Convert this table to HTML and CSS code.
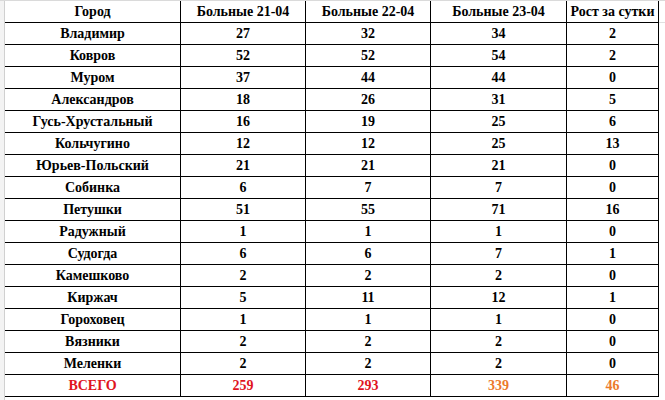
FILE: index.html
```html
<!DOCTYPE html>
<html lang="ru">
<head>
<meta charset="utf-8">
<title>Больные по городам</title>
<link rel="stylesheet" href="styles.css">
</head>
<body>
<div class="sheet">
  <div class="row-strip"></div>
  <table class="grid">
    <colgroup>
      <col class="c-city"><col class="c-num"><col class="c-num"><col class="c-num3"><col class="c-grow"><col class="c-pad">
    </colgroup>
    <thead>
      <tr><th>Город</th><th>Больные 21-04</th><th>Больные 22-04</th><th>Больные 23-04</th><th>Рост за сутки</th><td class="pad pad-line"></td></tr>
    </thead>
    <tbody>
      <tr><td>Владимир</td><td>27</td><td>32</td><td>34</td><td>2</td><td class="pad"></td></tr>
      <tr><td>Ковров</td><td>52</td><td>52</td><td>54</td><td>2</td><td class="pad"></td></tr>
      <tr><td>Муром</td><td>37</td><td>44</td><td>44</td><td>0</td><td class="pad"></td></tr>
      <tr><td>Александров</td><td>18</td><td>26</td><td>31</td><td>5</td><td class="pad"></td></tr>
      <tr><td>Гусь-Хрустальный</td><td>16</td><td>19</td><td>25</td><td>6</td><td class="pad"></td></tr>
      <tr><td>Кольчугино</td><td>12</td><td>12</td><td>25</td><td>13</td><td class="pad"></td></tr>
      <tr><td>Юрьев-Польский</td><td>21</td><td>21</td><td>21</td><td>0</td><td class="pad"></td></tr>
      <tr><td>Собинка</td><td>6</td><td>7</td><td>7</td><td>0</td><td class="pad"></td></tr>
      <tr><td>Петушки</td><td>51</td><td>55</td><td>71</td><td>16</td><td class="pad"></td></tr>
      <tr><td>Радужный</td><td>1</td><td>1</td><td>1</td><td>0</td><td class="pad"></td></tr>
      <tr><td>Судогда</td><td>6</td><td>6</td><td>7</td><td>1</td><td class="pad"></td></tr>
      <tr><td>Камешково</td><td>2</td><td>2</td><td>2</td><td>0</td><td class="pad"></td></tr>
      <tr><td>Киржач</td><td>5</td><td>11</td><td>12</td><td>1</td><td class="pad"></td></tr>
      <tr><td>Гороховец</td><td>1</td><td>1</td><td>1</td><td>0</td><td class="pad"></td></tr>
      <tr><td>Вязники</td><td>2</td><td>2</td><td>2</td><td>0</td><td class="pad"></td></tr>
      <tr><td>Меленки</td><td>2</td><td>2</td><td>2</td><td>0</td><td class="pad"></td></tr>
      <tr class="total"><td class="red">ВСЕГО</td><td class="red">259</td><td class="red">293</td><td class="orange">339</td><td class="orange">46</td><td class="pad"></td></tr>
    </tbody>
  </table>
</div>
</body>
</html>
```

FILE: styles.css
```css
html, body {
  margin: 0;
  padding: 0;
  background: #ffffff;
}

.sheet {
  display: flex;
  align-items: stretch;
  width: 665px;
  height: 400px;
  border-top: 1px solid #dadada;
  box-sizing: border-box;
  overflow: hidden;
}

.row-strip {
  width: 4px;
  flex: none;
  background: #f3f3f3;
  border-right: 1px solid #d0d0d0;
}

.grid {
  border-collapse: separate;
  border-spacing: 0;
  table-layout: fixed;
  width: 660px;
  align-self: flex-start;
  font-family: "Liberation Serif", "Times New Roman", serif;
  font-weight: bold;
  font-size: 14px;
  color: #000;
}

.c-city { width: 176px; }
.c-num { width: 125px; }
.c-num3 { width: 136px; }
.c-grow { width: 92px; }
.c-pad { width: 6px; }

.grid th,
.grid td {
  height: 21px;
  padding: 0;
  text-align: center;
  vertical-align: middle;
  border-right: 1px solid #000;
  border-bottom: 1px solid #000;
  white-space: nowrap;
  overflow: hidden;
  line-height: 21px;
  box-sizing: content-box;
}

.grid th {
  font-weight: bold;
}

.grid td.pad {
  border-right: none;
  border-bottom: none;
}

.grid td.pad-line {
  border-bottom: 1px solid #e0e0e0;
}

.red { color: #e0141e; }
.orange { color: #ec7a2c; }
```
